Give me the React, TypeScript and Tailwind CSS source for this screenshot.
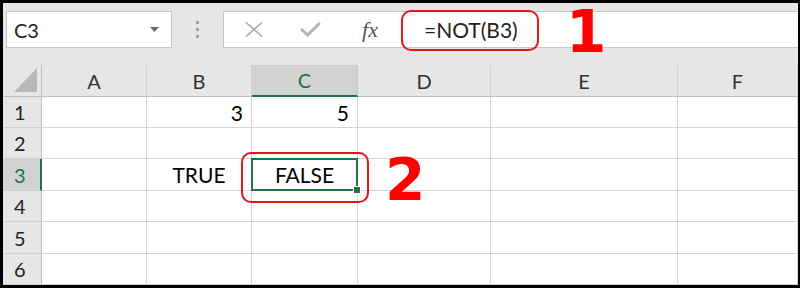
import React from 'react';

const cols = ['A', 'B', 'C', 'D', 'E', 'F'];

type Cell = { text?: string; align?: 'left' | 'right' | 'center' };

const rows: Cell[][] = [
  [{}, { text: '3', align: 'right' }, { text: '5', align: 'right' }, {}, {}, {}],
  [{}, {}, {}, {}, {}, {}],
  [{}, { text: 'TRUE', align: 'center' }, { text: 'FALSE', align: 'center' }, {}, {}, {}],
  [{}, {}, {}, {}, {}, {}],
  [{}, {}, {}, {}, {}, {}],
  [{}, {}, {}, {}, {}, {}],
];

const font = { fontFamily: 'Lato, "Open Sans", sans-serif' };

const App: React.FC = () => {
  return (
    <div className="w-[800px] h-[288px] bg-black pt-[3px] pl-[3px] pr-[2px] pb-[3px]">
      <div className="relative w-full h-full flex flex-col bg-[#e6e6e6]" style={font}>
        {/* formula bar row */}
        <div className="h-[62px] flex items-start pt-[8px] pl-[3px]">
          <div className="w-[166px] h-[37px] bg-white border border-[#c6c6c6] flex items-center justify-between pl-[7px] pr-[12px]">
            <span className="text-[20px] text-[#222] leading-none">C3</span>
            <svg width="9" height="5" viewBox="0 0 9 5">
              <path d="M0 0 L9 0 L4.5 5 Z" fill="#6b6b6b" />
            </svg>
          </div>
          <div className="w-[51px] h-[37px] flex flex-col items-center justify-center gap-[4px]">
            <span className="w-[3px] h-[3px] bg-[#a3a3a3]" />
            <span className="w-[3px] h-[3px] bg-[#a3a3a3]" />
            <span className="w-[3px] h-[3px] bg-[#a3a3a3]" />
          </div>
          <div className="flex-1 h-[37px] bg-white border border-r-0 border-[#c6c6c6] flex items-center">
            <div className="w-[56px] flex justify-center pl-[4px]">
              <svg width="18" height="15" viewBox="0 0 18 15">
                <path d="M1 0.5 L17 14.5 M17 0.5 L1 14.5" stroke="#a8a8a8" strokeWidth="1.6" />
              </svg>
            </div>
            <div className="w-[60px] flex justify-center">
              <svg width="21" height="15" viewBox="0 0 21 15">
                <path d="M1 7 L7.5 13 L20 1" stroke="#b4b4b4" strokeWidth="3" fill="none" />
              </svg>
            </div>
            <div className="w-[60px] flex justify-center">
              <span
                className="italic text-[22px] text-[#555] leading-none"
                style={{ fontFamily: '"Liberation Serif", serif' }}
              >
                fx
              </span>
            </div>
            <span className="ml-[24px] text-[21px] text-[#222] leading-none">=NOT(B3)</span>
          </div>
        </div>

        {/* grid */}
        <div className="flex-1 grid grid-cols-[39px_105px_105px_106px_133px_187px_1fr] grid-rows-[32px_31px_31px_32px_31px_32px_1fr]">
          <div className="border-r border-b border-[#c0c0c0] flex items-end justify-end pr-[4px] pb-[4px]">
            <svg width="23" height="24" viewBox="0 0 23 24">
              <path d="M23 0 L23 24 L0 24 Z" fill="#b8b8b8" />
            </svg>
          </div>
          {cols.map((c) => (
            <div
              key={c}
              className={`flex items-center justify-center text-[20px] leading-none ${
                c === 'C'
                  ? 'bg-[#d2d2d2] text-[#217346] border-b-2 border-[#217346] border-r border-r-[#c6c6c6]'
                  : 'text-[#333] border-r border-b border-r-[#d0d0d0] border-b-[#c0c0c0]'
              }`}
            >
              {c}
            </div>
          ))}
          {rows.map((r, i) => (
            <React.Fragment key={i}>
              <div
                className={`flex items-center pl-[11px] text-[20px] leading-none border-b border-b-[#d0d0d0] ${
                  i === 2
                    ? 'bg-[#d2d2d2] text-[#217346] border-r-2 border-r-[#217346]'
                    : 'text-[#222] border-r border-r-[#c0c0c0]'
                }`}
              >
                {i + 1}
              </div>
              {r.map((cell, j) => {
                const selected = i === 2 && j === 2;
                return (
                  <div
                    key={j}
                    className={`relative bg-white flex items-center px-[8px] text-[21px] leading-none text-black ${
                      cell.align === 'right' ? 'justify-end' : cell.align === 'center' ? 'justify-center' : 'justify-start'
                    } ${selected ? 'z-10 border-2 border-[#217346] -mt-[1px] -ml-[1px]' : 'border-r border-b border-[#d4d4d4]'}`}
                  >
                    {cell.text}
                    {selected && (
                      <span className="absolute -right-[5px] -bottom-[5px] w-[8px] h-[8px] bg-[#217346] border border-white" />
                    )}
                  </div>
                );
              })}
            </React.Fragment>
          ))}
        </div>

        {/* annotations */}
        <div className="absolute z-20 left-[398px] top-[7px] w-[138px] h-[41px] border-2 border-[#e8141a] rounded-[10px]" />
        <span
          className="absolute z-20 left-[563px] top-0 text-[58px] font-bold text-[#ff0000] leading-none"
          style={{ fontFamily: '"DejaVu Sans", sans-serif' }}
        >
          1
        </span>
        <div className="absolute z-20 left-[238px] top-[149px] w-[128px] h-[51px] border-2 border-[#e8141a] rounded-[10px]" />
        <span
          className="absolute z-20 left-[382px] top-[148px] text-[58px] font-bold text-[#ff0000] leading-none"
          style={{ fontFamily: '"DejaVu Sans", sans-serif' }}
        >
          2
        </span>
      </div>
    </div>
  );
};

export default App;
